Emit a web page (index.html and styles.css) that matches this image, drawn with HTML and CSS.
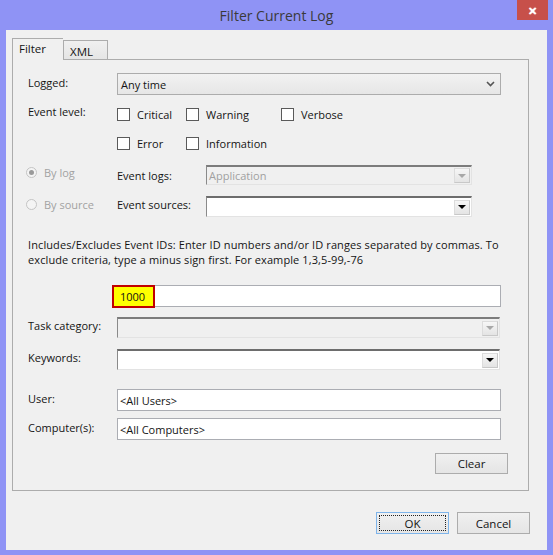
FILE: index.html
```html
<!DOCTYPE html>
<html lang="en">
<head>
  <meta charset="UTF-8" />
  <title>Filter Current Log</title>
  <link rel="stylesheet" href="styles.css">
</head>
<body>
  <div class="window">
    <div class="titlebar">
      <span class="title">Filter Current Log</span>
      <span class="close">&#x2715;</span>
    </div>

    <div class="client">
      <div class="tabs">
        <div class="tab active">Filter</div>
        <div class="tab">XML</div>
      </div>

      <div class="panel">
        <div class="row row-logged">
          <span class="label">Logged:</span>
          <div class="combo-flat">
            <span>Any time</span>
            <svg class="chevron" width="9" height="6" viewBox="0 0 9 6"><polyline points="1,1 4.5,4.5 8,1" fill="none" stroke="#555" stroke-width="1.6"/></svg>
          </div>
        </div>

        <div class="row row-level">
          <span class="label">Event level:</span>
          <div class="checks">
            <label class="check"><span class="box"></span>Critical</label>
            <label class="check"><span class="box"></span>Warning</label>
            <label class="check"><span class="box"></span>Verbose</label>
          </div>
        </div>
        <div class="row row-level2">
          <span class="label"></span>
          <div class="checks">
            <label class="check"><span class="box"></span>Error</label>
            <label class="check"><span class="box"></span>Information</label>
          </div>
        </div>

        <div class="row row-logs">
          <label class="radio disabled"><span class="dot checked"></span>By log</label>
          <span class="sublabel">Event logs:</span>
          <div class="combo-3d disabled">
            <span class="value">Application</span>
            <span class="drop"><span class="tri"></span></span>
          </div>
        </div>
        <div class="row row-sources">
          <label class="radio disabled"><span class="dot"></span>By source</label>
          <span class="sublabel">Event sources:</span>
          <div class="combo-3d">
            <span class="value"></span>
            <span class="drop"><span class="tri"></span></span>
          </div>
        </div>

        <p class="hint">Includes/Excludes Event IDs: Enter ID numbers and/or ID ranges separated by commas. To exclude criteria, type a minus sign first. For example 1,3,5-99,-76</p>

        <div class="row row-ids">
          <span class="label"></span>
          <div class="textbox">
            <span class="mark">1000</span>
          </div>
        </div>

        <div class="row row-task">
          <span class="label">Task category:</span>
          <div class="combo-3d disabled wide">
            <span class="value"></span>
            <span class="drop"><span class="tri"></span></span>
          </div>
        </div>
        <div class="row row-keywords">
          <span class="label">Keywords:</span>
          <div class="combo-3d wide">
            <span class="value"></span>
            <span class="drop"><span class="tri"></span></span>
          </div>
        </div>

        <div class="row row-user">
          <span class="label">User:</span>
          <div class="textbox"><span>&lt;All Users&gt;</span></div>
        </div>
        <div class="row row-computer">
          <span class="label">Computer(s):</span>
          <div class="textbox"><span>&lt;All Computers&gt;</span></div>
        </div>

        <div class="clear-row">
          <button class="btn">Clear</button>
        </div>
      </div>

      <div class="actions">
        <button class="btn default"><span>OK</span></button>
        <button class="btn">Cancel</button>
      </div>
    </div>
  </div>
</body>
</html>
```

FILE: styles.css
```css
body {
  margin: 0;
  font-family: 'Open Sans', 'Noto Sans', sans-serif;
  font-size: 11px;
  color: #141414;
  background: #8f93f5;
}
.window {
  width: 553px;
  height: 555px;
  background: #8f93f5;
  display: flex;
  flex-direction: column;
}
.titlebar {
  height: 30px;
  position: relative;
  display: flex;
  align-items: center;
  justify-content: center;
}
.title {
  font-size: 14px;
  color: #3a3a3a;
}
.close {
  position: absolute;
  left: 517px;
  top: 0;
  width: 31px;
  height: 20px;
  background: #c7504a;
  color: #fff;
  font-size: 11px;
  font-weight: bold;
  display: flex;
  align-items: center;
  justify-content: center;
  text-shadow: 0 0 1px #fff;
}
.client {
  margin: 0 6px 5px 6px;
  height: 520px;
  background: #f0f0f0;
  padding: 8px 17px 0 6px;
  box-sizing: border-box;
  display: flex;
  flex-direction: column;
}

/* tabs */
.tabs {
  display: flex;
  align-items: flex-end;
  height: 21px;
  position: relative;
  z-index: 1;
}
.tab {
  border: 1px solid #acacac;
  border-bottom: none;
  height: 19px;
  padding: 0 14px 0 7px;
  background: linear-gradient(#f0f0f0, #e5e5e5);
  font-size: 11.5px;
  display: flex;
  align-items: center;
  box-sizing: border-box;
}
.tab.active {
  height: 22px;
  margin-bottom: -1px;
  width: 51px;
  padding: 0 0 2px 6px;
  background: #f0f0f0;
  border-right: none;
}
.tab + .tab {
  width: 45px;
  padding: 2px 0 0 6px;
}

.panel {
  border: 1px solid #acacac;
  margin-right: 1px;
  padding: 13px 20px 16px 15px;
  background: #f0f0f0;
}

.row {
  display: flex;
  align-items: center;
  margin-right: 7px;
}
.label {
  width: 89px;
  flex: none;
}
.row-logged { height: 22px; }
.row-logged .label { margin-top: -3px; }
.row-level { height: 22px; margin-top: 8px; align-items: flex-start; padding-top: 4px; box-sizing: border-box; }
.row-level .label { margin-top: -3px; }
.row-level2 { height: 22px; margin-top: 7px; }
.row-logs { height: 20px; margin-top: 11px; }
.row-sources { height: 21px; margin-top: 11px; }
.row-ids { height: 22px; margin-top: 18px; }
.row-task { height: 21px; margin-top: 10px; }
.row-keywords { height: 21px; margin-top: 11px; }
.row-task .label, .row-keywords .label { margin-top: -4px; }
.row-user { height: 22px; margin-top: 19px; }
.row-computer { height: 22px; margin-top: 7px; }

/* combos */
.combo-flat {
  flex: 1;
  height: 22px;
  border: 1px solid #acacac;
  background: linear-gradient(#f2f2f2, #e6e6e6);
  box-sizing: border-box;
  display: flex;
  align-items: center;
  justify-content: space-between;
  padding: 0 4px 0 3px;
}
.chevron {
  margin-right: 1px;
}
.combo-3d {
  width: 266px;
  height: 100%;
  box-sizing: border-box;
  background: #fff;
  border-top: 2px solid #6d6d6d;
  border-left: 1px solid #8a8a8a;
  border-right: 1px solid #e3e3e3;
  border-bottom: 1px solid #e3e3e3;
  display: flex;
  align-items: center;
  justify-content: space-between;
}
.combo-3d.wide {
  flex: 1;
  margin-right: 1px;
}
.combo-3d.disabled {
  background: #f0f0f0;
  border-top-color: #7c7c7c;
}
.combo-3d .value {
  padding-left: 2px;
  color: #a0a0a0;
}
.drop {
  width: 16px;
  height: 15px;
  margin-right: 1px;
  box-sizing: border-box;
  border: 1px solid #dcdcdc;
  border-right-color: #c8c8c8;
  border-bottom-color: #c8c8c8;
  background: linear-gradient(#f6f6f6, #e4e4e4);
  display: flex;
  align-items: center;
  justify-content: center;
}
.tri {
  width: 0;
  height: 0;
  border-left: 4px solid transparent;
  border-right: 4px solid transparent;
  border-top: 4px solid #000;
}
.disabled .tri {
  border-top-color: #a8a8a8;
}

/* check boxes */
.checks {
  display: grid;
  grid-template-columns: 69px 95px auto;
}
.check {
  display: flex;
  align-items: center;
  gap: 7px;
}
.box {
  width: 13px;
  height: 13px;
  box-sizing: border-box;
  border: 1px solid #5a5a5a;
  background: #fff;
}

/* radios */
.radio {
  width: 91px;
  margin-left: -2px;
  display: flex;
  align-items: center;
  gap: 7px;
  margin-top: -6px;
}
.radio.disabled {
  color: #a2a2a2;
}
.dot {
  width: 11px;
  height: 11px;
  box-sizing: border-box;
  border-radius: 50%;
  border: 1px solid #c4c4c4;
  background: #f4f4f4;
  display: flex;
  align-items: center;
  justify-content: center;
}
.dot.checked::after {
  content: "";
  width: 5px;
  height: 5px;
  border-radius: 50%;
  background: #9a9a9a;
}
.sublabel {
  width: 89px;
  flex: none;
}
.row-sources .sublabel { margin-top: -4px; }
.row-sources .radio { margin-top: -4px; }

.hint {
  margin: 21px 0 0 0;
  line-height: 14.5px;
  width: 485px;
  letter-spacing: 0.1px;
}

/* text boxes */
.textbox {
  flex: 1;
  height: 22px;
  box-sizing: border-box;
  border: 1px solid #abadb3;
  background: #fff;
  display: flex;
  align-items: center;
  padding-left: 2px;
}
.mark {
  margin-left: -8px;
  width: 43px;
  height: 23px;
  box-sizing: border-box;
  border: 2px solid #c00000;
  background: #ffff00;
  padding-left: 6px;
  display: flex;
  align-items: center;
}
.row-user .label, .row-computer .label {
  margin-top: -4px;
}

/* buttons */
.clear-row {
  display: flex;
  justify-content: flex-end;
  margin-top: 13px;
}
.btn {
  font-family: inherit;
  font-size: 11.5px;
  color: #141414;
  width: 73px;
  height: 21px;
  padding: 0;
  border: 1px solid #acacac;
  background: linear-gradient(#f0f0f0, #e5e5e5);
}
.actions {
  display: flex;
  justify-content: flex-end;
  gap: 8px;
  margin-top: 21px;
}
.actions .btn {
  height: 22px;
}
.btn.default {
  border-color: #7eb4ea;
  padding: 2px;
}
.btn.default span {
  display: flex;
  height: 100%;
  align-items: center;
  justify-content: center;
  outline: 1px dotted #222;
  outline-offset: -1px;
}
```
